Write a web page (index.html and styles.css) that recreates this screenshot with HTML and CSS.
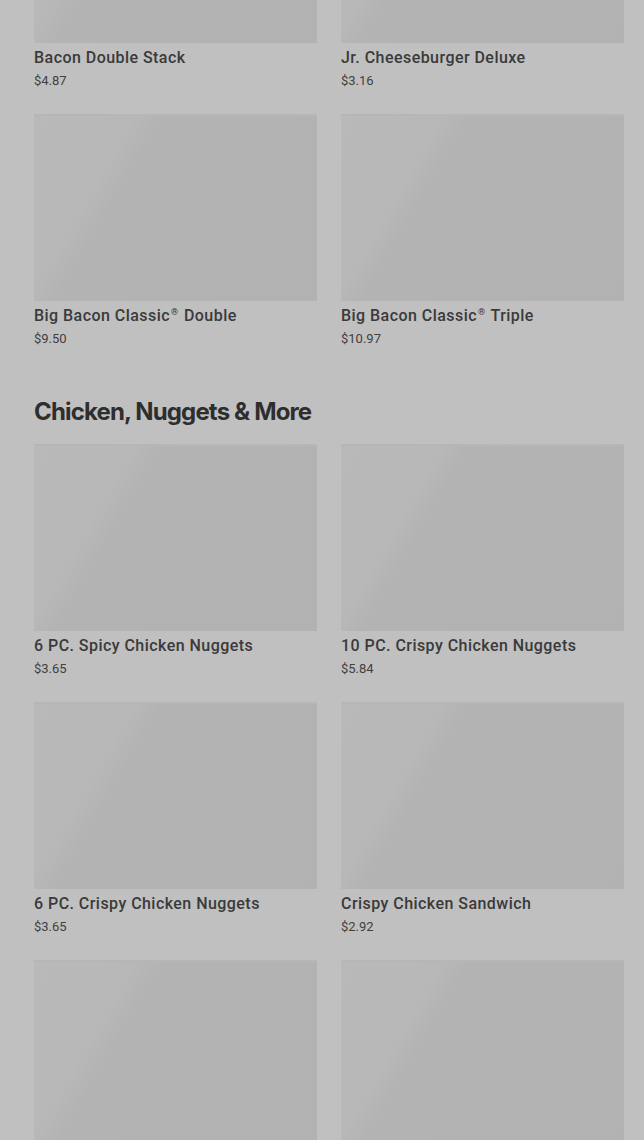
FILE: index.html
```html
<!DOCTYPE html>
<html lang="en">
<head>
    <meta charset="UTF-8">
    <meta name="viewport" content="width=device-width, initial-scale=1.0">
    <title>Menu</title>
    <link rel="stylesheet" href="styles.css">
</head>
<body>
    <main class="menu">
        <section class="menu-section">
            <div class="item-grid">
                <div class="item">
                    <div class="item-img"></div>
                    <div class="item-name">Bacon Double Stack</div>
                    <div class="item-price">$4.87</div>
                </div>
                <div class="item">
                    <div class="item-img"></div>
                    <div class="item-name">Jr. Cheeseburger Deluxe</div>
                    <div class="item-price">$3.16</div>
                </div>
                <div class="item">
                    <div class="item-img"></div>
                    <div class="item-name">Big Bacon Classic<sup class="reg">®</sup> Double</div>
                    <div class="item-price">$9.50</div>
                </div>
                <div class="item">
                    <div class="item-img"></div>
                    <div class="item-name">Big Bacon Classic<sup class="reg">®</sup> Triple</div>
                    <div class="item-price">$10.97</div>
                </div>
            </div>
        </section>

        <section class="menu-section">
            <h2 class="section-title">Chicken, Nuggets &amp; More</h2>
            <div class="item-grid">
                <div class="item">
                    <div class="item-img"></div>
                    <div class="item-name">6 PC. Spicy Chicken Nuggets</div>
                    <div class="item-price">$3.65</div>
                </div>
                <div class="item">
                    <div class="item-img"></div>
                    <div class="item-name">10 PC. Crispy Chicken Nuggets</div>
                    <div class="item-price">$5.84</div>
                </div>
                <div class="item">
                    <div class="item-img"></div>
                    <div class="item-name">6 PC. Crispy Chicken Nuggets</div>
                    <div class="item-price">$3.65</div>
                </div>
                <div class="item">
                    <div class="item-img"></div>
                    <div class="item-name">Crispy Chicken Sandwich</div>
                    <div class="item-price">$2.92</div>
                </div>
                <div class="item">
                    <div class="item-img"></div>
                </div>
                <div class="item">
                    <div class="item-img"></div>
                </div>
            </div>
        </section>
    </main>
</body>
</html>
```

FILE: styles.css
```css
body {
    margin: 0;
    background: #c0c0c0;
    font-family: Roboto, 'Liberation Sans', sans-serif;
    color: #333333;
    overflow: hidden;
}
.menu {
    /* page is scrolled: first row of images is cut at the top */
    margin-top: -144px;
    padding: 0 20px 0 34px;
}
.item-grid {
    display: grid;
    grid-template-columns: 1fr 1fr;
    column-gap: 24px;
    row-gap: 24px;
}
.item {
    height: 234px;
}
.item-img {
    height: 187px;
    background: linear-gradient(120deg, #b9b9b9 0%, #b8b8b8 26%, #b3b3b3 33%, #b2b2b2 100%);
    box-shadow: inset 0 2px 0 #b6b6b6;
}
.item-name {
    margin-top: 5px;
    font-size: 16px;
    line-height: 20px;
    font-weight: 500;
    letter-spacing: 0.45px;
    color: #3a3a3a;
}
.reg {
    font-size: 9px;
    line-height: 0;
    margin: 0 1px;
    vertical-align: 6px;
}
.item-price {
    margin-top: 4px;
    font-size: 13px;
    line-height: 18px;
    color: #404040;
}
.section-title {
    margin: 48px 0 16px;
    font-family: Inter, 'Noto Sans', sans-serif;
    font-size: 24px;
    line-height: 32px;
    font-weight: 700;
    letter-spacing: -0.85px;
    color: #2e2e2e;
}
```
